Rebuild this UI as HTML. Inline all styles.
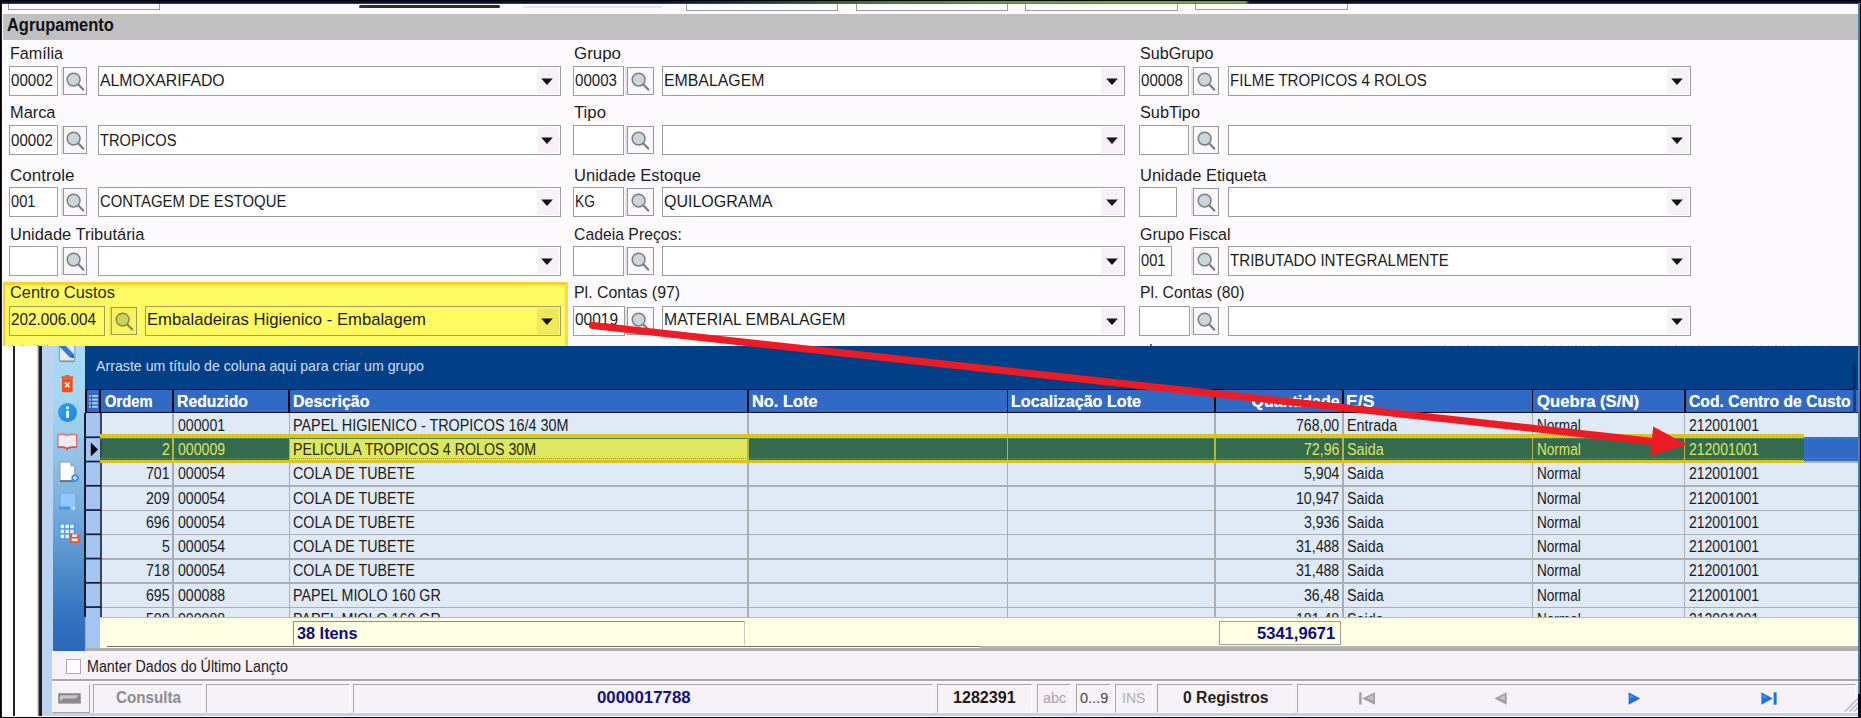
<!DOCTYPE html>
<html lang="pt-BR"><head><meta charset="utf-8"><title>Agrupamento</title>
<style>
html,body{margin:0;padding:0;}
body{width:1861px;height:718px;overflow:hidden;background:#fdfafd;font-family:"Liberation Sans",sans-serif;position:relative;}
#root{position:absolute;left:0;top:0;width:1861px;height:718px;overflow:hidden;background:#fdfafd;}
#root div,#root svg{position:absolute;box-sizing:border-box;}
.t{white-space:pre;transform-origin:0 50%;}
.inp{border:1.5px solid #a6a6a6;background:#fff;}
.btn{border:1.5px solid #8f8f8f;}
.btn svg{top:-1px;}
.dd{}
</style></head><body><div id="root">

<div class="" style="left:3px;top:3px;width:1855px;height:11px;background:#fefcfe;"></div>
<div class="" style="left:8px;top:3px;width:152px;height:7px;border:1.5px solid #9a9a9a;border-top:none;"></div>
<div class="" style="left:358.5px;top:5.2px;width:141.8px;height:3.2px;background:#2c2c2a;border-radius:1.6px;"></div>
<div class="" style="left:523px;top:5.5px;width:139px;height:2.0px;background:#e4e4e8;"></div>
<div class="" style="left:686px;top:3px;width:152px;height:8px;border:1.5px solid #9a9a9a;border-top:none;"></div>
<div class="" style="left:856px;top:3px;width:152px;height:8px;border:1.5px solid #9a9a9a;border-top:none;"></div>
<div class="" style="left:1025px;top:3px;width:153px;height:8px;border:1.5px solid #9a9a9a;border-top:none;"></div>
<div class="" style="left:1195px;top:3px;width:153px;height:7px;border:1.5px solid #9a9a9a;border-top:none;"></div>
<div class="" style="left:3px;top:14px;width:1855px;height:25.5px;background:#c0c0c0;"></div>
<div class="t" style="left:6.60px;top:14.79px;font-size:17.6px;line-height:21.12px;color:#111;font-weight:bold;transform:scaleX(0.9335);">Agrupamento</div>
<div class="" style="left:3.4px;top:282.3px;width:564.2px;height:63.599999999999966px;background:#fffa62;border-top:3px solid #ffd02a;border-left:2.6px solid #ffcc20;border-right:3.6px solid #ffda3e;"></div>
<div class="t" style="left:9.50px;top:43.17px;font-size:17.2px;line-height:20.64px;color:#1c1c1c;transform:scaleX(0.9399);">Família</div>
<div class="inp" style="left:8.5px;top:65.5px;width:49.5px;height:30.099999999999994px;background:#ffffff;border-color:#9c9c9c;"></div>
<div class="btn" style="left:62.7px;top:66.5px;width:24.799999999999997px;height:28.099999999999994px;background:#faf7fa;border-color:#979797;box-shadow:-2px 0 0 #e6e3e6;"><svg style="left:-1.00px" viewBox="0 0 24 28" width="24" height="28"><circle cx="10.6" cy="12.6" r="6.4" fill="#c9d6dc" stroke="#7d7d7d" stroke-width="1.5"/><path d="M15.4 17.6 L20.2 22.6" stroke="#7d7d7d" stroke-width="2.2" stroke-linecap="round"/></svg></div>
<div class="inp" style="left:97.5px;top:65.5px;width:463.20000000000005px;height:30.099999999999994px;background:#ffffff;border-color:#9c9c9c;"></div>
<div class="dd" style="left:536.7px;top:67.5px;width:22.0px;height:26.099999999999994px;background:#f5f1f5;"></div>
<svg class="a" style="left:540.1px;top:76.55px" width="14" height="9" viewBox="0 0 14 9"><path d="M1.2 1.6 L12.8 1.6 L7 8 Z" fill="#111"/></svg>
<div class="t" style="left:10.50px;top:70.17px;font-size:17.2px;line-height:20.64px;color:#1a1a1a;transform:scaleX(0.8781);">00002</div>
<div class="t" style="left:99.50px;top:70.17px;font-size:17.2px;line-height:20.64px;color:#1a1a1a;transform:scaleX(0.9188);">ALMOXARIFADO</div>
<div class="t" style="left:573.60px;top:43.17px;font-size:17.2px;line-height:20.64px;color:#1c1c1c;transform:scaleX(0.9832);">Grupo</div>
<div class="inp" style="left:573px;top:65.5px;width:50.60000000000002px;height:30.099999999999994px;background:#ffffff;border-color:#9c9c9c;"></div>
<div class="btn" style="left:626.9px;top:66.5px;width:26.800000000000068px;height:28.099999999999994px;background:#faf7fa;border-color:#979797;box-shadow:-2px 0 0 #e6e3e6;"><svg style="left:0.00px" viewBox="0 0 24 28" width="24" height="28"><circle cx="10.6" cy="12.6" r="6.4" fill="#c9d6dc" stroke="#7d7d7d" stroke-width="1.5"/><path d="M15.4 17.6 L20.2 22.6" stroke="#7d7d7d" stroke-width="2.2" stroke-linecap="round"/></svg></div>
<div class="inp" style="left:662px;top:65.5px;width:463.20000000000005px;height:30.099999999999994px;background:#ffffff;border-color:#9c9c9c;"></div>
<div class="dd" style="left:1101.2px;top:67.5px;width:22.0px;height:26.099999999999994px;background:#f5f1f5;"></div>
<svg class="a" style="left:1104.6000000000001px;top:76.55px" width="14" height="9" viewBox="0 0 14 9"><path d="M1.2 1.6 L12.8 1.6 L7 8 Z" fill="#111"/></svg>
<div class="t" style="left:575.00px;top:70.17px;font-size:17.2px;line-height:20.64px;color:#1a1a1a;transform:scaleX(0.8781);">00003</div>
<div class="t" style="left:664.00px;top:70.17px;font-size:17.2px;line-height:20.64px;color:#1a1a1a;transform:scaleX(0.9224);">EMBALAGEM</div>
<div class="t" style="left:1139.80px;top:43.17px;font-size:17.2px;line-height:20.64px;color:#1c1c1c;transform:scaleX(0.9374);">SubGrupo</div>
<div class="inp" style="left:1139.2px;top:65.5px;width:49.799999999999955px;height:30.099999999999994px;background:#ffffff;border-color:#9c9c9c;"></div>
<div class="btn" style="left:1192.7px;top:66.5px;width:26.799999999999955px;height:28.099999999999994px;background:#faf7fa;border-color:#979797;box-shadow:-2px 0 0 #e6e3e6;"><svg style="left:-0.00px" viewBox="0 0 24 28" width="24" height="28"><circle cx="10.6" cy="12.6" r="6.4" fill="#c9d6dc" stroke="#7d7d7d" stroke-width="1.5"/><path d="M15.4 17.6 L20.2 22.6" stroke="#7d7d7d" stroke-width="2.2" stroke-linecap="round"/></svg></div>
<div class="inp" style="left:1228px;top:65.5px;width:463px;height:30.099999999999994px;background:#ffffff;border-color:#9c9c9c;"></div>
<div class="dd" style="left:1667px;top:67.5px;width:22px;height:26.099999999999994px;background:#f5f1f5;"></div>
<svg class="a" style="left:1670.4px;top:76.55px" width="14" height="9" viewBox="0 0 14 9"><path d="M1.2 1.6 L12.8 1.6 L7 8 Z" fill="#111"/></svg>
<div class="t" style="left:1141.20px;top:70.17px;font-size:17.2px;line-height:20.64px;color:#1a1a1a;transform:scaleX(0.8781);">00008</div>
<div class="t" style="left:1230.00px;top:70.17px;font-size:17.2px;line-height:20.64px;color:#1a1a1a;transform:scaleX(0.8784);">FILME TROPICOS 4 ROLOS</div>
<div class="t" style="left:9.50px;top:102.17px;font-size:17.2px;line-height:20.64px;color:#1c1c1c;transform:scaleX(0.9521);">Marca</div>
<div class="inp" style="left:8.5px;top:124.7px;width:49.5px;height:30.10000000000001px;background:#ffffff;border-color:#9c9c9c;"></div>
<div class="btn" style="left:62.7px;top:125.7px;width:24.799999999999997px;height:28.10000000000001px;background:#faf7fa;border-color:#979797;box-shadow:-2px 0 0 #e6e3e6;"><svg style="left:-1.00px" viewBox="0 0 24 28" width="24" height="28"><circle cx="10.6" cy="12.6" r="6.4" fill="#c9d6dc" stroke="#7d7d7d" stroke-width="1.5"/><path d="M15.4 17.6 L20.2 22.6" stroke="#7d7d7d" stroke-width="2.2" stroke-linecap="round"/></svg></div>
<div class="inp" style="left:97.5px;top:124.7px;width:463.20000000000005px;height:30.10000000000001px;background:#ffffff;border-color:#9c9c9c;"></div>
<div class="dd" style="left:536.7px;top:126.7px;width:22.0px;height:26.10000000000001px;background:#f5f1f5;"></div>
<svg class="a" style="left:540.1px;top:135.75px" width="14" height="9" viewBox="0 0 14 9"><path d="M1.2 1.6 L12.8 1.6 L7 8 Z" fill="#111"/></svg>
<div class="t" style="left:10.50px;top:130.17px;font-size:17.2px;line-height:20.64px;color:#1a1a1a;transform:scaleX(0.8781);">00002</div>
<div class="t" style="left:99.50px;top:130.17px;font-size:17.2px;line-height:20.64px;color:#1a1a1a;transform:scaleX(0.8516);">TROPICOS</div>
<div class="t" style="left:573.60px;top:102.17px;font-size:17.2px;line-height:20.64px;color:#1c1c1c;transform:scaleX(0.9750);">Tipo</div>
<div class="inp" style="left:573px;top:124.7px;width:50.60000000000002px;height:30.10000000000001px;background:#ffffff;border-color:#9c9c9c;"></div>
<div class="btn" style="left:626.9px;top:125.7px;width:26.800000000000068px;height:28.10000000000001px;background:#faf7fa;border-color:#979797;box-shadow:-2px 0 0 #e6e3e6;"><svg style="left:0.00px" viewBox="0 0 24 28" width="24" height="28"><circle cx="10.6" cy="12.6" r="6.4" fill="#c9d6dc" stroke="#7d7d7d" stroke-width="1.5"/><path d="M15.4 17.6 L20.2 22.6" stroke="#7d7d7d" stroke-width="2.2" stroke-linecap="round"/></svg></div>
<div class="inp" style="left:662px;top:124.7px;width:463.20000000000005px;height:30.10000000000001px;background:#ffffff;border-color:#9c9c9c;"></div>
<div class="dd" style="left:1101.2px;top:126.7px;width:22.0px;height:26.10000000000001px;background:#f5f1f5;"></div>
<svg class="a" style="left:1104.6000000000001px;top:135.75px" width="14" height="9" viewBox="0 0 14 9"><path d="M1.2 1.6 L12.8 1.6 L7 8 Z" fill="#111"/></svg>
<div class="t" style="left:1139.80px;top:102.17px;font-size:17.2px;line-height:20.64px;color:#1c1c1c;transform:scaleX(0.9460);">SubTipo</div>
<div class="inp" style="left:1139.2px;top:124.7px;width:49.799999999999955px;height:30.10000000000001px;background:#ffffff;border-color:#9c9c9c;"></div>
<div class="btn" style="left:1192.7px;top:125.7px;width:26.799999999999955px;height:28.10000000000001px;background:#faf7fa;border-color:#979797;box-shadow:-2px 0 0 #e6e3e6;"><svg style="left:-0.00px" viewBox="0 0 24 28" width="24" height="28"><circle cx="10.6" cy="12.6" r="6.4" fill="#c9d6dc" stroke="#7d7d7d" stroke-width="1.5"/><path d="M15.4 17.6 L20.2 22.6" stroke="#7d7d7d" stroke-width="2.2" stroke-linecap="round"/></svg></div>
<div class="inp" style="left:1228px;top:124.7px;width:463px;height:30.10000000000001px;background:#ffffff;border-color:#9c9c9c;"></div>
<div class="dd" style="left:1667px;top:126.7px;width:22px;height:26.10000000000001px;background:#f5f1f5;"></div>
<svg class="a" style="left:1670.4px;top:135.75px" width="14" height="9" viewBox="0 0 14 9"><path d="M1.2 1.6 L12.8 1.6 L7 8 Z" fill="#111"/></svg>
<div class="t" style="left:9.50px;top:165.17px;font-size:17.2px;line-height:20.64px;color:#1c1c1c;transform:scaleX(0.9921);">Controle</div>
<div class="inp" style="left:8.5px;top:187px;width:49.5px;height:29.599999999999994px;background:#ffffff;border-color:#9c9c9c;"></div>
<div class="btn" style="left:62.7px;top:188px;width:24.799999999999997px;height:27.599999999999994px;background:#faf7fa;border-color:#979797;box-shadow:-2px 0 0 #e6e3e6;"><svg style="left:-1.00px" viewBox="0 0 24 28" width="24" height="28"><circle cx="10.6" cy="12.6" r="6.4" fill="#c9d6dc" stroke="#7d7d7d" stroke-width="1.5"/><path d="M15.4 17.6 L20.2 22.6" stroke="#7d7d7d" stroke-width="2.2" stroke-linecap="round"/></svg></div>
<div class="inp" style="left:97.5px;top:187px;width:463.20000000000005px;height:29.599999999999994px;background:#ffffff;border-color:#9c9c9c;"></div>
<div class="dd" style="left:536.7px;top:189px;width:22.0px;height:25.599999999999994px;background:#f5f1f5;"></div>
<svg class="a" style="left:540.1px;top:197.8px" width="14" height="9" viewBox="0 0 14 9"><path d="M1.2 1.6 L12.8 1.6 L7 8 Z" fill="#111"/></svg>
<div class="t" style="left:10.50px;top:191.17px;font-size:17.2px;line-height:20.64px;color:#1a1a1a;transform:scaleX(0.8538);">001</div>
<div class="t" style="left:99.50px;top:191.17px;font-size:17.2px;line-height:20.64px;color:#1a1a1a;transform:scaleX(0.8661);">CONTAGEM DE ESTOQUE</div>
<div class="t" style="left:573.60px;top:165.17px;font-size:17.2px;line-height:20.64px;color:#1c1c1c;transform:scaleX(0.9624);">Unidade Estoque</div>
<div class="inp" style="left:573px;top:187px;width:50.60000000000002px;height:29.599999999999994px;background:#ffffff;border-color:#9c9c9c;"></div>
<div class="btn" style="left:626.9px;top:188px;width:26.800000000000068px;height:27.599999999999994px;background:#faf7fa;border-color:#979797;box-shadow:-2px 0 0 #e6e3e6;"><svg style="left:0.00px" viewBox="0 0 24 28" width="24" height="28"><circle cx="10.6" cy="12.6" r="6.4" fill="#c9d6dc" stroke="#7d7d7d" stroke-width="1.5"/><path d="M15.4 17.6 L20.2 22.6" stroke="#7d7d7d" stroke-width="2.2" stroke-linecap="round"/></svg></div>
<div class="inp" style="left:662px;top:187px;width:463.20000000000005px;height:29.599999999999994px;background:#ffffff;border-color:#9c9c9c;"></div>
<div class="dd" style="left:1101.2px;top:189px;width:22.0px;height:25.599999999999994px;background:#f5f1f5;"></div>
<svg class="a" style="left:1104.6000000000001px;top:197.8px" width="14" height="9" viewBox="0 0 14 9"><path d="M1.2 1.6 L12.8 1.6 L7 8 Z" fill="#111"/></svg>
<div class="t" style="left:575.00px;top:191.17px;font-size:17.2px;line-height:20.64px;color:#1a1a1a;transform:scaleX(0.8048);">KG</div>
<div class="t" style="left:664.00px;top:191.17px;font-size:17.2px;line-height:20.64px;color:#1a1a1a;transform:scaleX(0.9306);">QUILOGRAMA</div>
<div class="t" style="left:1139.80px;top:165.17px;font-size:17.2px;line-height:20.64px;color:#1c1c1c;transform:scaleX(0.9586);">Unidade Etiqueta</div>
<div class="inp" style="left:1139.2px;top:187px;width:37.799999999999955px;height:29.599999999999994px;background:#ffffff;border-color:#9c9c9c;"></div>
<div class="btn" style="left:1192.7px;top:188px;width:26.799999999999955px;height:27.599999999999994px;background:#faf7fa;border-color:#979797;box-shadow:-2px 0 0 #e6e3e6;"><svg style="left:-0.00px" viewBox="0 0 24 28" width="24" height="28"><circle cx="10.6" cy="12.6" r="6.4" fill="#c9d6dc" stroke="#7d7d7d" stroke-width="1.5"/><path d="M15.4 17.6 L20.2 22.6" stroke="#7d7d7d" stroke-width="2.2" stroke-linecap="round"/></svg></div>
<div class="inp" style="left:1228px;top:187px;width:463px;height:29.599999999999994px;background:#ffffff;border-color:#9c9c9c;"></div>
<div class="dd" style="left:1667px;top:189px;width:22px;height:25.599999999999994px;background:#f5f1f5;"></div>
<svg class="a" style="left:1670.4px;top:197.8px" width="14" height="9" viewBox="0 0 14 9"><path d="M1.2 1.6 L12.8 1.6 L7 8 Z" fill="#111"/></svg>
<div class="t" style="left:9.50px;top:224.17px;font-size:17.2px;line-height:20.64px;color:#1c1c1c;transform:scaleX(0.9570);">Unidade Tributária</div>
<div class="inp" style="left:8.5px;top:246.4px;width:49.5px;height:29.599999999999994px;background:#ffffff;border-color:#9c9c9c;"></div>
<div class="btn" style="left:62.7px;top:247.4px;width:24.799999999999997px;height:27.599999999999994px;background:#faf7fa;border-color:#979797;box-shadow:-2px 0 0 #e6e3e6;"><svg style="left:-1.00px" viewBox="0 0 24 28" width="24" height="28"><circle cx="10.6" cy="12.6" r="6.4" fill="#c9d6dc" stroke="#7d7d7d" stroke-width="1.5"/><path d="M15.4 17.6 L20.2 22.6" stroke="#7d7d7d" stroke-width="2.2" stroke-linecap="round"/></svg></div>
<div class="inp" style="left:97.5px;top:246.4px;width:463.20000000000005px;height:29.599999999999994px;background:#ffffff;border-color:#9c9c9c;"></div>
<div class="dd" style="left:536.7px;top:248.4px;width:22.0px;height:25.599999999999994px;background:#f5f1f5;"></div>
<svg class="a" style="left:540.1px;top:257.2px" width="14" height="9" viewBox="0 0 14 9"><path d="M1.2 1.6 L12.8 1.6 L7 8 Z" fill="#111"/></svg>
<div class="t" style="left:573.60px;top:224.17px;font-size:17.2px;line-height:20.64px;color:#1c1c1c;transform:scaleX(0.9176);">Cadeia Preços:</div>
<div class="inp" style="left:573px;top:246.4px;width:50.60000000000002px;height:29.599999999999994px;background:#ffffff;border-color:#9c9c9c;"></div>
<div class="btn" style="left:626.9px;top:247.4px;width:26.800000000000068px;height:27.599999999999994px;background:#faf7fa;border-color:#979797;box-shadow:-2px 0 0 #e6e3e6;"><svg style="left:0.00px" viewBox="0 0 24 28" width="24" height="28"><circle cx="10.6" cy="12.6" r="6.4" fill="#c9d6dc" stroke="#7d7d7d" stroke-width="1.5"/><path d="M15.4 17.6 L20.2 22.6" stroke="#7d7d7d" stroke-width="2.2" stroke-linecap="round"/></svg></div>
<div class="inp" style="left:662px;top:246.4px;width:463.20000000000005px;height:29.599999999999994px;background:#ffffff;border-color:#9c9c9c;"></div>
<div class="dd" style="left:1101.2px;top:248.4px;width:22.0px;height:25.599999999999994px;background:#f5f1f5;"></div>
<svg class="a" style="left:1104.6000000000001px;top:257.2px" width="14" height="9" viewBox="0 0 14 9"><path d="M1.2 1.6 L12.8 1.6 L7 8 Z" fill="#111"/></svg>
<div class="t" style="left:1139.80px;top:224.17px;font-size:17.2px;line-height:20.64px;color:#1c1c1c;transform:scaleX(0.9293);">Grupo Fiscal</div>
<div class="inp" style="left:1139.2px;top:246.4px;width:33.0px;height:29.599999999999994px;background:#ffffff;border-color:#9c9c9c;"></div>
<div class="btn" style="left:1192.7px;top:247.4px;width:26.799999999999955px;height:27.599999999999994px;background:#faf7fa;border-color:#979797;box-shadow:-2px 0 0 #e6e3e6;"><svg style="left:-0.00px" viewBox="0 0 24 28" width="24" height="28"><circle cx="10.6" cy="12.6" r="6.4" fill="#c9d6dc" stroke="#7d7d7d" stroke-width="1.5"/><path d="M15.4 17.6 L20.2 22.6" stroke="#7d7d7d" stroke-width="2.2" stroke-linecap="round"/></svg></div>
<div class="inp" style="left:1228px;top:246.4px;width:463px;height:29.599999999999994px;background:#ffffff;border-color:#9c9c9c;"></div>
<div class="dd" style="left:1667px;top:248.4px;width:22px;height:25.599999999999994px;background:#f5f1f5;"></div>
<svg class="a" style="left:1670.4px;top:257.2px" width="14" height="9" viewBox="0 0 14 9"><path d="M1.2 1.6 L12.8 1.6 L7 8 Z" fill="#111"/></svg>
<div class="t" style="left:1141.20px;top:250.17px;font-size:17.2px;line-height:20.64px;color:#1a1a1a;transform:scaleX(0.8538);">001</div>
<div class="t" style="left:1230.00px;top:250.17px;font-size:17.2px;line-height:20.64px;color:#1a1a1a;transform:scaleX(0.8792);">TRIBUTADO INTEGRALMENTE</div>
<div class="t" style="left:9.50px;top:282.17px;font-size:17.2px;line-height:20.64px;color:#2a2a10;transform:scaleX(0.9551);">Centro Custos</div>
<div class="inp" style="left:8.5px;top:306.1px;width:96.2px;height:29.599999999999966px;background:#fffa62;border-color:#a39e5e;"></div>
<div class="btn" style="left:111px;top:307.1px;width:26px;height:27.599999999999966px;background:#f8f260;border-color:#9a9a50;box-shadow:-2px 0 0 #ece65c;"><svg style="left:-0.40px" viewBox="0 0 24 28" width="24" height="28"><circle cx="10.6" cy="12.6" r="6.4" fill="#c6d45a" stroke="#8a8a40" stroke-width="1.5"/><path d="M15.4 17.6 L20.2 22.6" stroke="#8a8a40" stroke-width="2.2" stroke-linecap="round"/></svg></div>
<div class="inp" style="left:144.8px;top:306.1px;width:415.90000000000003px;height:29.599999999999966px;background:#fffa62;border-color:#a39e5e;"></div>
<div class="dd" style="left:536.7px;top:308.1px;width:22.0px;height:25.599999999999966px;background:#eee85a;"></div>
<svg class="a" style="left:540.1px;top:316.9px" width="14" height="9" viewBox="0 0 14 9"><path d="M1.2 1.6 L12.8 1.6 L7 8 Z" fill="#111"/></svg>
<div class="t" style="left:10.50px;top:309.17px;font-size:17.2px;line-height:20.64px;color:#1a1a1a;transform:scaleX(0.8887);">202.006.004</div>
<div class="t" style="left:146.80px;top:309.17px;font-size:17.2px;line-height:20.64px;color:#1a1a1a;transform:scaleX(0.9696);">Embaladeiras Higienico - Embalagem</div>
<div class="t" style="left:573.60px;top:282.17px;font-size:17.2px;line-height:20.64px;color:#1c1c1c;transform:scaleX(0.9258);">Pl. Contas (97)</div>
<div class="inp" style="left:573px;top:306.1px;width:52px;height:29.599999999999966px;background:#ffffff;border-color:#9c9c9c;"></div>
<div class="btn" style="left:626.9px;top:307.1px;width:26.800000000000068px;height:27.599999999999966px;background:#faf7fa;border-color:#979797;box-shadow:-2px 0 0 #e6e3e6;"><svg style="left:0.00px" viewBox="0 0 24 28" width="24" height="28"><circle cx="10.6" cy="12.6" r="6.4" fill="#c9d6dc" stroke="#7d7d7d" stroke-width="1.5"/><path d="M15.4 17.6 L20.2 22.6" stroke="#7d7d7d" stroke-width="2.2" stroke-linecap="round"/></svg></div>
<div class="inp" style="left:662px;top:306.1px;width:463.20000000000005px;height:29.599999999999966px;background:#ffffff;border-color:#9c9c9c;"></div>
<div class="dd" style="left:1101.2px;top:308.1px;width:22.0px;height:25.599999999999966px;background:#f5f1f5;"></div>
<svg class="a" style="left:1104.6000000000001px;top:316.9px" width="14" height="9" viewBox="0 0 14 9"><path d="M1.2 1.6 L12.8 1.6 L7 8 Z" fill="#111"/></svg>
<div class="t" style="left:575.00px;top:309.17px;font-size:17.2px;line-height:20.64px;color:#1a1a1a;transform:scaleX(0.8991);">00019</div>
<div class="t" style="left:664.00px;top:309.17px;font-size:17.2px;line-height:20.64px;color:#1a1a1a;transform:scaleX(0.9174);">MATERIAL EMBALAGEM</div>
<div class="t" style="left:1139.80px;top:282.17px;font-size:17.2px;line-height:20.64px;color:#1c1c1c;transform:scaleX(0.9110);">Pl. Contas (80)</div>
<div class="inp" style="left:1139.2px;top:306.1px;width:51.299999999999955px;height:29.599999999999966px;background:#ffffff;border-color:#9c9c9c;"></div>
<div class="btn" style="left:1192.7px;top:307.1px;width:26.799999999999955px;height:27.599999999999966px;background:#faf7fa;border-color:#979797;box-shadow:-2px 0 0 #e6e3e6;"><svg style="left:-0.00px" viewBox="0 0 24 28" width="24" height="28"><circle cx="10.6" cy="12.6" r="6.4" fill="#c9d6dc" stroke="#7d7d7d" stroke-width="1.5"/><path d="M15.4 17.6 L20.2 22.6" stroke="#7d7d7d" stroke-width="2.2" stroke-linecap="round"/></svg></div>
<div class="inp" style="left:1228px;top:306.1px;width:463px;height:29.599999999999966px;background:#ffffff;border-color:#9c9c9c;"></div>
<div class="dd" style="left:1667px;top:308.1px;width:22px;height:25.599999999999966px;background:#f5f1f5;"></div>
<svg class="a" style="left:1670.4px;top:316.9px" width="14" height="9" viewBox="0 0 14 9"><path d="M1.2 1.6 L12.8 1.6 L7 8 Z" fill="#111"/></svg>
<div class="" style="left:11.6px;top:344.6px;width:1.5px;height:1.1999999999999886px;background:#8f8a2a;opacity:.8;"></div>
<div class="" style="left:21.6px;top:344.6px;width:1.5px;height:1.1999999999999886px;background:#8f8a2a;opacity:.8;"></div>
<div class="" style="left:37.2px;top:344.6px;width:1.5px;height:1.1999999999999886px;background:#8f8a2a;opacity:.8;"></div>
<div class="" style="left:46.6px;top:344.6px;width:1.5px;height:1.1999999999999886px;background:#8f8a2a;opacity:.8;"></div>
<div class="" style="left:1150.2px;top:344.2px;width:1.400000000000091px;height:1.5px;background:#6a6a70;"></div>
<div class="" style="left:1429px;top:344.5px;width:421px;height:1.1999999999999886px;background:repeating-linear-gradient(90deg,#9a9aa2 0,#9a9aa2 1.2px,transparent 1.2px,transparent 7.7px);opacity:.45;"></div>
<div class="" style="left:2px;top:345.7px;width:40px;height:370.8px;background:#ffffff;"></div>
<div class="" style="left:12.8px;top:345.7px;width:1.799999999999999px;height:370.8px;background:#222;"></div>
<div class="" style="left:35.5px;top:345.7px;width:6.5px;height:370.8px;background:linear-gradient(90deg,#ffffff 0%,#d8d8d8 30%,#555 48%,#1c1c1c 60%,#1c1c1c 100%);"></div>
<div class="" style="left:42px;top:345.7px;width:1817px;height:370.8px;background:#bcd3ef;"></div>
<div class="" style="left:52.6px;top:345.7px;width:31.999999999999993px;height:305.00000000000006px;background:linear-gradient(180deg,#a9daf4 0%,#a6d6f2 18%,#8fc0e6 38%,#6ea6da 58%,#4a88c8 76%,#2f6fbe 92%,#2b69b8 100%);"></div>
<div style="left:52.6px;top:345.7px;width:32px;height:305px;overflow:hidden;">
<svg style="left:3.6px;top:-5.4px" width="24" height="24" viewBox="0 0 24 24"><path d="M3.4 0 H14.6 L18.8 4.6 V20 Q18.8 21.6 17.2 21.6 H5 Q3.4 21.6 3.4 20 Z" fill="#e6eaf0" stroke="#9aa3ad" stroke-width="1.2"/><path d="M4 21.2 H18.4" stroke="#8a929c" stroke-width="1.6"/><path d="M2 1.4 L15 15" stroke="#2f7bd9" stroke-width="5.2" stroke-linecap="butt"/><path d="M12.8 17 L17.2 12.8 L18.6 18.6 Z" fill="#2a66b8"/></svg>
<svg style="left:7.6px;top:28.2px" width="14.6" height="19.6" viewBox="0 0 18 22" preserveAspectRatio="none"><path d="M6.4 1.2 H11.6 V3 H6.4 Z" fill="#f2521e"/><rect x="1.6" y="2.4" width="14.8" height="2.6" rx="0.8" fill="#f4541f"/><path d="M2.4 5 H15.6 V19 Q15.6 20.4 14.2 20.4 H3.8 Q2.4 20.4 2.4 19 Z" fill="#fb4a12"/><path d="M6.2 9.4 L11.8 15 M11.8 9.4 L6.2 15" stroke="#fff" stroke-width="2.1"/></svg>
<svg style="left:4.6px;top:56.4px" width="21" height="21" viewBox="0 0 21 21"><defs><linearGradient id="gi" x1="0" y1="0" x2="1" y2="1"><stop offset="0" stop-color="#2aa2f2"/><stop offset="1" stop-color="#1a86e0"/></linearGradient></defs><circle cx="10.5" cy="10.5" r="9.4" fill="url(#gi)"/><circle cx="10.5" cy="5.8" r="1.5" fill="#fff"/><rect x="9.2" y="8.4" width="2.7" height="7.6" rx="0.6" fill="#fff"/></svg>
<svg style="left:4.8px;top:87.8px" width="20.6" height="18" viewBox="0 0 23 19" preserveAspectRatio="none"><path d="M1 2.2 Q6.4 0.4 11.5 2.6 Q16.6 0.4 22 2.2 V15.4 Q16.6 14 11.5 16 Q6.4 14 1 15.4 Z" fill="#f1eaf0" stroke="#d9706c" stroke-width="1.5"/><path d="M1.4 15.2 Q6.4 14.2 11.5 16.4 Q16.6 14.2 21.6 15.2" fill="none" stroke="#d25852" stroke-width="1.8"/><path d="M11.5 16 V18.4" stroke="#c85650" stroke-width="1.6"/></svg>
<svg style="left:5.6px;top:115.4px" width="22" height="22" viewBox="0 0 22 22"><path d="M2 1 H12.4 L16.6 5.2 V20 H2 Z" fill="#fdfdfd" stroke="#8a929c" stroke-width="0.9"/><path d="M12.4 1 V5.2 H16.6 Z" fill="#9aa0a8"/><path d="M2 20 H16.6" stroke="#555c66" stroke-width="1.4"/><circle cx="17" cy="17" r="3.7" fill="#3b92ea"/><path d="M15 17 H19 M17 15 V19" stroke="#fff" stroke-width="1.2"/></svg>
<svg style="left:5px;top:147px" width="20" height="18" viewBox="0 0 20 18"><rect x="3" y="1" width="14" height="15.4" fill="#90c8ff"/><rect x="0.8" y="13.4" width="11.6" height="3.4" rx="1" fill="#3d99f2"/><path d="M13.4 16.4 L17 16.4 L17 13 Z" fill="#cfe6ff"/></svg>
<svg style="left:6.4px;top:177px" width="22" height="21" viewBox="0 0 22 21"><rect x="0.6" y="0.6" width="15.4" height="15.6" fill="#4a90de"/><g fill="#eaf2fc"><rect x="1.6" y="1.6" width="3.6" height="3.6"/><rect x="6.4" y="1.6" width="3.6" height="3.6"/><rect x="11.2" y="1.6" width="3.6" height="3.6"/><rect x="1.6" y="6.6" width="3.6" height="3.6"/><rect x="6.4" y="6.6" width="3.6" height="3.6"/><rect x="11.2" y="6.6" width="3.6" height="3.6"/><rect x="1.6" y="11.6" width="3.6" height="3.6"/><rect x="6.4" y="11.6" width="3.6" height="3.6"/></g><rect x="11" y="11.4" width="9.4" height="8.6" rx="0.8" fill="#f0512f"/><rect x="13" y="11.4" width="5.2" height="2.6" fill="#fbd9d0"/><rect x="12.6" y="15.6" width="6.2" height="2.6" fill="#fff"/></svg>
</div>
<div class="" style="left:84.6px;top:345.7px;width:1773.6000000000001px;height:44.30000000000001px;background:#014086;"></div>
<div class="t" style="left:96.40px;top:357.25px;font-size:15px;line-height:18.0px;color:#d3dff2;transform:scaleX(0.9457);">Arraste um título de coluna aqui para criar um grupo</div>
<div class="" style="left:1852.8px;top:363px;width:2.7999999999999545px;height:287px;background:#0a2a63;"></div>
<div class="" style="left:84.6px;top:389px;width:1773.6000000000001px;height:261.70000000000005px;background:#a8a8a8;"></div>
<div class="" style="left:85.8px;top:389px;width:1772.4px;height:228px;background:#dfeaf6;"></div>
<div class="" style="left:85.8px;top:389px;width:1772.4px;height:24.19999999999999px;background:#316ac5;border-top:1.6px solid #050a14;border-bottom:1.6px solid #050a14;"></div>
<div class="" style="left:99.39999999999999px;top:389px;width:1.8000000000000114px;height:24.19999999999999px;background:#050a14;"></div>
<div class="" style="left:172.1px;top:389px;width:1.8000000000000114px;height:24.19999999999999px;background:#050a14;"></div>
<div class="" style="left:288.40000000000003px;top:389px;width:1.7999999999999545px;height:24.19999999999999px;background:#050a14;"></div>
<div class="" style="left:747.1px;top:389px;width:1.7999999999999545px;height:24.19999999999999px;background:#050a14;"></div>
<div class="" style="left:1006.7px;top:389px;width:1.7999999999999545px;height:24.19999999999999px;background:#050a14;"></div>
<div class="" style="left:1214.1px;top:389px;width:1.800000000000182px;height:24.19999999999999px;background:#050a14;"></div>
<div class="" style="left:1342.1px;top:389px;width:1.800000000000182px;height:24.19999999999999px;background:#050a14;"></div>
<div class="" style="left:1531.6999999999998px;top:389px;width:1.800000000000182px;height:24.19999999999999px;background:#050a14;"></div>
<div class="" style="left:1683.8999999999999px;top:389px;width:1.800000000000182px;height:24.19999999999999px;background:#050a14;"></div>
<div class="" style="left:84.8px;top:389px;width:1.7999999999999972px;height:24.19999999999999px;background:#050a14;"></div>
<div class="" style="left:1852.8px;top:389px;width:2.7999999999999545px;height:24.19999999999999px;background:#1b3f86;"></div>
<svg style="left:88px;top:394px" width="11" height="15" viewBox="0 0 11 15"><g fill="#b4caf4"><rect x="1" y="1" width="1.6" height="2"/><rect x="1" y="4.6" width="1.6" height="2"/><rect x="1" y="8.2" width="1.6" height="2"/><rect x="1" y="11.8" width="1.6" height="2"/><rect x="4.2" y="1" width="5.6" height="2"/><rect x="4.2" y="4.6" width="5.6" height="2"/><rect x="4.2" y="8.2" width="5.6" height="2"/><rect x="4.2" y="11.8" width="5.6" height="2"/></g></svg>
<div class="t" style="left:105.00px;top:392.31px;font-size:16.0px;line-height:19.2px;color:#ffffff;font-weight:bold;transform:scaleX(0.9211);text-shadow:0 0 1px rgba(255,255,255,.55);">Ordem</div>
<div class="t" style="left:177.30px;top:392.31px;font-size:16.0px;line-height:19.2px;color:#ffffff;font-weight:bold;transform:scaleX(0.9862);text-shadow:0 0 1px rgba(255,255,255,.55);">Reduzido</div>
<div class="t" style="left:293.00px;top:392.31px;font-size:16.0px;line-height:19.2px;color:#ffffff;font-weight:bold;text-shadow:0 0 1px rgba(255,255,255,.55);">Descrição</div>
<div class="t" style="left:752.00px;top:392.31px;font-size:16.0px;line-height:19.2px;color:#ffffff;font-weight:bold;transform:scaleX(1.0251);text-shadow:0 0 1px rgba(255,255,255,.55);">No. Lote</div>
<div class="t" style="left:1011.30px;top:392.31px;font-size:16.0px;line-height:19.2px;color:#ffffff;font-weight:bold;transform:scaleX(1.0084);text-shadow:0 0 1px rgba(255,255,255,.55);">Localização Lote</div>
<div class="t" style="left:1251.60px;top:392.31px;font-size:16.0px;line-height:19.2px;color:#ffffff;font-weight:bold;text-shadow:0 0 1px rgba(255,255,255,.55);">Quantidade</div>
<div class="t" style="left:1346.30px;top:392.31px;font-size:16.0px;line-height:19.2px;color:#ffffff;font-weight:bold;transform:scaleX(1.1012);text-shadow:0 0 1px rgba(255,255,255,.55);">E/S</div>
<div class="t" style="left:1537.00px;top:392.31px;font-size:16.0px;line-height:19.2px;color:#ffffff;font-weight:bold;transform:scaleX(1.0431);text-shadow:0 0 1px rgba(255,255,255,.55);">Quebra (S/N)</div>
<div class="t" style="left:1689.00px;top:392.31px;font-size:16.0px;line-height:19.2px;color:#ffffff;font-weight:bold;transform:scaleX(0.9834);text-shadow:0 0 1px rgba(255,255,255,.55);">Cod. Centro de Custo</div>
<div style="left:0;top:413.3px;width:1861px;height:203.7px;overflow:hidden;">
<div class="" style="left:85.8px;top:0.0px;width:14.5px;height:25.26px;background:#a5c5f0;"></div>
<div class="" style="left:100.3px;top:23.560000000000002px;width:1757.9px;height:1.3999999999999986px;background:#a9aeb4;"></div>
<div class="t" style="left:177.60px;top:3.02px;font-size:16.3px;line-height:19.56px;color:#1a1a1a;transform:scaleX(0.8680);">000001</div>
<div class="t" style="left:293.00px;top:3.02px;font-size:16.3px;line-height:19.56px;color:#1a1a1a;transform:scaleX(0.8834);">PAPEL HIGIENICO - TROPICOS 16/4 30M</div>
<div class="t" style="left:1296.22px;top:3.02px;font-size:16.3px;line-height:19.56px;color:#1a1a1a;transform:scaleX(0.8680);">768,00</div>
<div class="t" style="left:1346.50px;top:3.02px;font-size:16.3px;line-height:19.56px;color:#1a1a1a;transform:scaleX(0.8790);">Entrada</div>
<div class="t" style="left:1536.80px;top:3.02px;font-size:16.3px;line-height:19.56px;color:#1a1a1a;transform:scaleX(0.8338);">Normal</div>
<div class="t" style="left:1689.00px;top:3.02px;font-size:16.3px;line-height:19.56px;color:#1a1a1a;transform:scaleX(0.8604);">212001001</div>
<div class="" style="left:85.8px;top:24.26px;width:14.5px;height:25.26px;background:#a5c5f0;"></div>
<div class="" style="left:100.3px;top:47.82px;width:1757.9px;height:1.4000000000000057px;background:#a9aeb4;"></div>
<div class="" style="left:100.3px;top:24.060000000000002px;width:1757.9px;height:23.86px;background:#316ac5;"></div>
<div class="" style="left:100.3px;top:24.060000000000002px;width:1704.1000000000001px;height:23.86px;background:#336b4c;"></div>
<div class="" style="left:289.3px;top:25.66px;width:458.7px;height:20.860000000000003px;background:#dfe85c;"></div>
<div class="t" style="left:161.73px;top:27.02px;font-size:16.3px;line-height:19.56px;color:#dbe663;transform:scaleX(0.8680);">2</div>
<div class="t" style="left:177.60px;top:27.02px;font-size:16.3px;line-height:19.56px;color:#dbe663;transform:scaleX(0.8680);">000009</div>
<div class="t" style="left:293.00px;top:27.02px;font-size:16.3px;line-height:19.56px;color:#26260c;transform:scaleX(0.8733);">PELICULA TROPICOS 4 ROLOS 30M</div>
<div class="t" style="left:1304.09px;top:27.02px;font-size:16.3px;line-height:19.56px;color:#dbe663;transform:scaleX(0.8680);">72,96</div>
<div class="t" style="left:1346.50px;top:27.02px;font-size:16.3px;line-height:19.56px;color:#dbe663;transform:scaleX(0.8790);">Saida</div>
<div class="t" style="left:1536.80px;top:27.02px;font-size:16.3px;line-height:19.56px;color:#dbe663;transform:scaleX(0.8338);">Normal</div>
<div class="t" style="left:1689.00px;top:27.02px;font-size:16.3px;line-height:19.56px;color:#dbe663;transform:scaleX(0.8604);">212001001</div>
<div class="" style="left:85.8px;top:48.52px;width:14.5px;height:25.259999999999998px;background:#a5c5f0;"></div>
<div class="" style="left:100.3px;top:72.08px;width:1757.9px;height:1.4000000000000057px;background:#a9aeb4;"></div>
<div class="t" style="left:145.99px;top:51.02px;font-size:16.3px;line-height:19.56px;color:#1a1a1a;transform:scaleX(0.8680);">701</div>
<div class="t" style="left:177.60px;top:51.02px;font-size:16.3px;line-height:19.56px;color:#1a1a1a;transform:scaleX(0.8680);">000054</div>
<div class="t" style="left:293.00px;top:51.02px;font-size:16.3px;line-height:19.56px;color:#1a1a1a;transform:scaleX(0.8765);">COLA DE TUBETE</div>
<div class="t" style="left:1304.09px;top:51.02px;font-size:16.3px;line-height:19.56px;color:#1a1a1a;transform:scaleX(0.8680);">5,904</div>
<div class="t" style="left:1346.50px;top:51.02px;font-size:16.3px;line-height:19.56px;color:#1a1a1a;transform:scaleX(0.8790);">Saida</div>
<div class="t" style="left:1536.80px;top:51.02px;font-size:16.3px;line-height:19.56px;color:#1a1a1a;transform:scaleX(0.8338);">Normal</div>
<div class="t" style="left:1689.00px;top:51.02px;font-size:16.3px;line-height:19.56px;color:#1a1a1a;transform:scaleX(0.8604);">212001001</div>
<div class="" style="left:85.8px;top:72.78px;width:14.5px;height:25.260000000000005px;background:#a5c5f0;"></div>
<div class="" style="left:100.3px;top:96.34px;width:1757.9px;height:1.4000000000000057px;background:#a9aeb4;"></div>
<div class="t" style="left:145.99px;top:76.02px;font-size:16.3px;line-height:19.56px;color:#1a1a1a;transform:scaleX(0.8680);">209</div>
<div class="t" style="left:177.60px;top:76.02px;font-size:16.3px;line-height:19.56px;color:#1a1a1a;transform:scaleX(0.8680);">000054</div>
<div class="t" style="left:293.00px;top:76.02px;font-size:16.3px;line-height:19.56px;color:#1a1a1a;transform:scaleX(0.8765);">COLA DE TUBETE</div>
<div class="t" style="left:1296.22px;top:76.02px;font-size:16.3px;line-height:19.56px;color:#1a1a1a;transform:scaleX(0.8680);">10,947</div>
<div class="t" style="left:1346.50px;top:76.02px;font-size:16.3px;line-height:19.56px;color:#1a1a1a;transform:scaleX(0.8790);">Saida</div>
<div class="t" style="left:1536.80px;top:76.02px;font-size:16.3px;line-height:19.56px;color:#1a1a1a;transform:scaleX(0.8338);">Normal</div>
<div class="t" style="left:1689.00px;top:76.02px;font-size:16.3px;line-height:19.56px;color:#1a1a1a;transform:scaleX(0.8604);">212001001</div>
<div class="" style="left:85.8px;top:97.04px;width:14.5px;height:25.260000000000005px;background:#a5c5f0;"></div>
<div class="" style="left:100.3px;top:120.60000000000001px;width:1757.9px;height:1.4000000000000057px;background:#a9aeb4;"></div>
<div class="t" style="left:145.99px;top:100.02px;font-size:16.3px;line-height:19.56px;color:#1a1a1a;transform:scaleX(0.8680);">696</div>
<div class="t" style="left:177.60px;top:100.02px;font-size:16.3px;line-height:19.56px;color:#1a1a1a;transform:scaleX(0.8680);">000054</div>
<div class="t" style="left:293.00px;top:100.02px;font-size:16.3px;line-height:19.56px;color:#1a1a1a;transform:scaleX(0.8765);">COLA DE TUBETE</div>
<div class="t" style="left:1304.09px;top:100.02px;font-size:16.3px;line-height:19.56px;color:#1a1a1a;transform:scaleX(0.8680);">3,936</div>
<div class="t" style="left:1346.50px;top:100.02px;font-size:16.3px;line-height:19.56px;color:#1a1a1a;transform:scaleX(0.8790);">Saida</div>
<div class="t" style="left:1536.80px;top:100.02px;font-size:16.3px;line-height:19.56px;color:#1a1a1a;transform:scaleX(0.8338);">Normal</div>
<div class="t" style="left:1689.00px;top:100.02px;font-size:16.3px;line-height:19.56px;color:#1a1a1a;transform:scaleX(0.8604);">212001001</div>
<div class="" style="left:85.8px;top:121.30000000000001px;width:14.5px;height:25.25999999999999px;background:#a5c5f0;"></div>
<div class="" style="left:100.3px;top:144.86px;width:1757.9px;height:1.3999999999999773px;background:#a9aeb4;"></div>
<div class="t" style="left:161.73px;top:124.02px;font-size:16.3px;line-height:19.56px;color:#1a1a1a;transform:scaleX(0.8680);">5</div>
<div class="t" style="left:177.60px;top:124.02px;font-size:16.3px;line-height:19.56px;color:#1a1a1a;transform:scaleX(0.8680);">000054</div>
<div class="t" style="left:293.00px;top:124.02px;font-size:16.3px;line-height:19.56px;color:#1a1a1a;transform:scaleX(0.8765);">COLA DE TUBETE</div>
<div class="t" style="left:1296.22px;top:124.02px;font-size:16.3px;line-height:19.56px;color:#1a1a1a;transform:scaleX(0.8680);">31,488</div>
<div class="t" style="left:1346.50px;top:124.02px;font-size:16.3px;line-height:19.56px;color:#1a1a1a;transform:scaleX(0.8790);">Saida</div>
<div class="t" style="left:1536.80px;top:124.02px;font-size:16.3px;line-height:19.56px;color:#1a1a1a;transform:scaleX(0.8338);">Normal</div>
<div class="t" style="left:1689.00px;top:124.02px;font-size:16.3px;line-height:19.56px;color:#1a1a1a;transform:scaleX(0.8604);">212001001</div>
<div class="" style="left:85.8px;top:145.56px;width:14.5px;height:25.26000000000002px;background:#a5c5f0;"></div>
<div class="" style="left:100.3px;top:169.12000000000003px;width:1757.9px;height:1.3999999999999773px;background:#a9aeb4;"></div>
<div class="t" style="left:145.99px;top:148.02px;font-size:16.3px;line-height:19.56px;color:#1a1a1a;transform:scaleX(0.8680);">718</div>
<div class="t" style="left:177.60px;top:148.02px;font-size:16.3px;line-height:19.56px;color:#1a1a1a;transform:scaleX(0.8680);">000054</div>
<div class="t" style="left:293.00px;top:148.02px;font-size:16.3px;line-height:19.56px;color:#1a1a1a;transform:scaleX(0.8765);">COLA DE TUBETE</div>
<div class="t" style="left:1296.22px;top:148.02px;font-size:16.3px;line-height:19.56px;color:#1a1a1a;transform:scaleX(0.8680);">31,488</div>
<div class="t" style="left:1346.50px;top:148.02px;font-size:16.3px;line-height:19.56px;color:#1a1a1a;transform:scaleX(0.8790);">Saida</div>
<div class="t" style="left:1536.80px;top:148.02px;font-size:16.3px;line-height:19.56px;color:#1a1a1a;transform:scaleX(0.8338);">Normal</div>
<div class="t" style="left:1689.00px;top:148.02px;font-size:16.3px;line-height:19.56px;color:#1a1a1a;transform:scaleX(0.8604);">212001001</div>
<div class="" style="left:85.8px;top:169.82000000000002px;width:14.5px;height:25.25999999999999px;background:#a5c5f0;"></div>
<div class="" style="left:100.3px;top:193.38000000000002px;width:1757.9px;height:1.3999999999999773px;background:#a9aeb4;"></div>
<div class="t" style="left:145.99px;top:173.02px;font-size:16.3px;line-height:19.56px;color:#1a1a1a;transform:scaleX(0.8680);">695</div>
<div class="t" style="left:177.60px;top:173.02px;font-size:16.3px;line-height:19.56px;color:#1a1a1a;transform:scaleX(0.8680);">000088</div>
<div class="t" style="left:293.00px;top:173.02px;font-size:16.3px;line-height:19.56px;color:#1a1a1a;transform:scaleX(0.8783);">PAPEL MIOLO 160 GR</div>
<div class="t" style="left:1304.09px;top:173.02px;font-size:16.3px;line-height:19.56px;color:#1a1a1a;transform:scaleX(0.8680);">36,48</div>
<div class="t" style="left:1346.50px;top:173.02px;font-size:16.3px;line-height:19.56px;color:#1a1a1a;transform:scaleX(0.8790);">Saida</div>
<div class="t" style="left:1536.80px;top:173.02px;font-size:16.3px;line-height:19.56px;color:#1a1a1a;transform:scaleX(0.8338);">Normal</div>
<div class="t" style="left:1689.00px;top:173.02px;font-size:16.3px;line-height:19.56px;color:#1a1a1a;transform:scaleX(0.8604);">212001001</div>
<div class="" style="left:85.8px;top:194.08px;width:14.5px;height:25.25999999999999px;background:#a5c5f0;"></div>
<div class="" style="left:100.3px;top:217.64000000000001px;width:1757.9px;height:1.3999999999999773px;background:#a9aeb4;"></div>
<div class="t" style="left:145.99px;top:197.02px;font-size:16.3px;line-height:19.56px;color:#1a1a1a;transform:scaleX(0.8680);">500</div>
<div class="t" style="left:177.60px;top:197.02px;font-size:16.3px;line-height:19.56px;color:#1a1a1a;transform:scaleX(0.8680);">000088</div>
<div class="t" style="left:293.00px;top:197.02px;font-size:16.3px;line-height:19.56px;color:#1a1a1a;transform:scaleX(0.8783);">PAPEL MIOLO 160 GR</div>
<div class="t" style="left:1296.22px;top:197.02px;font-size:16.3px;line-height:19.56px;color:#1a1a1a;transform:scaleX(0.8680);">181,48</div>
<div class="t" style="left:1346.50px;top:197.02px;font-size:16.3px;line-height:19.56px;color:#1a1a1a;transform:scaleX(0.8790);">Saida</div>
<div class="t" style="left:1536.80px;top:197.02px;font-size:16.3px;line-height:19.56px;color:#1a1a1a;transform:scaleX(0.8338);">Normal</div>
<div class="t" style="left:1689.00px;top:197.02px;font-size:16.3px;line-height:19.56px;color:#1a1a1a;transform:scaleX(0.8604);">212001001</div>
<div class="" style="left:172.3px;top:0px;width:1.3999999999999773px;height:218.34px;background:#a9aeb4;"></div>
<div class="" style="left:288.6px;top:0px;width:1.3999999999999773px;height:218.34px;background:#a9aeb4;"></div>
<div class="" style="left:747.3px;top:0px;width:1.400000000000091px;height:218.34px;background:#a9aeb4;"></div>
<div class="" style="left:1006.9px;top:0px;width:1.400000000000091px;height:218.34px;background:#a9aeb4;"></div>
<div class="" style="left:1214.3px;top:0px;width:1.400000000000091px;height:218.34px;background:#a9aeb4;"></div>
<div class="" style="left:1342.3px;top:0px;width:1.400000000000091px;height:218.34px;background:#a9aeb4;"></div>
<div class="" style="left:1531.8999999999999px;top:0px;width:1.400000000000091px;height:218.34px;background:#a9aeb4;"></div>
<div class="" style="left:1684.1px;top:0px;width:1.400000000000091px;height:218.34px;background:#a9aeb4;"></div>
<div class="" style="left:100.1px;top:0px;width:1.8000000000000114px;height:218.34px;background:#39435a;"></div>
<div class="" style="left:84.0px;top:0px;width:2.0px;height:218.34px;background:#141c30;"></div>
<svg style="left:85.8px;top:0" width="15" height="218.34" viewBox="0 0 15 218.34"><rect x="0" y="23.41" width="15" height="1.7" fill="#101c36"/><rect x="0" y="47.67" width="15" height="1.7" fill="#101c36"/><rect x="0" y="71.93" width="15" height="1.7" fill="#101c36"/><rect x="0" y="96.19" width="15" height="1.7" fill="#101c36"/><rect x="0" y="120.45" width="15" height="1.7" fill="#101c36"/><rect x="0" y="144.71" width="15" height="1.7" fill="#101c36"/><rect x="0" y="168.97" width="15" height="1.7" fill="#101c36"/><rect x="0" y="193.23" width="15" height="1.7" fill="#101c36"/><rect x="0" y="217.49" width="15" height="1.7" fill="#101c36"/></svg>
<div class="" style="left:100.3px;top:20.66px;width:1704.1000000000001px;height:3.900000000000002px;background:#dcc31e;"></div>
<div class="" style="left:100.3px;top:46.42px;width:1704.1000000000001px;height:3.700000000000003px;background:#dcc31e;"></div>
<div class="" style="left:100.3px;top:24.860000000000003px;width:1757.9px;height:1.3999999999999986px;border-top:1.4px dotted #8c8a34;"></div>
<div class="" style="left:100.3px;top:45.120000000000005px;width:1757.9px;height:1.3999999999999986px;border-top:1.4px dotted #8c8a34;"></div>
<div class="" style="left:172.3px;top:24.560000000000002px;width:1.3999999999999773px;height:21.86px;background:#b7b23a;"></div>
<div class="" style="left:288.6px;top:24.560000000000002px;width:1.3999999999999773px;height:21.86px;background:#b7b23a;"></div>
<div class="" style="left:747.3px;top:24.560000000000002px;width:1.400000000000091px;height:21.86px;background:#b7b23a;"></div>
<div class="" style="left:1006.9px;top:24.560000000000002px;width:1.400000000000091px;height:21.86px;background:#b7b23a;"></div>
<div class="" style="left:1214.3px;top:24.560000000000002px;width:1.400000000000091px;height:21.86px;background:#b7b23a;"></div>
<div class="" style="left:1342.3px;top:24.560000000000002px;width:1.400000000000091px;height:21.86px;background:#b7b23a;"></div>
<div class="" style="left:1531.8999999999999px;top:24.560000000000002px;width:1.400000000000091px;height:21.86px;background:#b7b23a;"></div>
<div class="" style="left:1684.1px;top:24.560000000000002px;width:1.400000000000091px;height:21.86px;background:#b7b23a;"></div>
<svg style="left:89.5px;top:28.660000000000004px" width="9" height="15" viewBox="0 0 9 15"><path d="M0.8 0.6 L8 7.5 L0.8 14.4 Z" fill="#0a0a0a"/></svg>
</div>
<div class="" style="left:85.8px;top:617px;width:1772.4px;height:30.600000000000023px;background:#ffffe3;border-top:1.4px solid #b9b9b9;"></div>
<div class="" style="left:85.8px;top:617px;width:14.5px;height:30.600000000000023px;background:#a5c5f0;"></div>
<div class="" style="left:106.5px;top:645.8px;width:873.5px;height:1.7000000000000455px;background:#6f6f66;"></div>
<div class="" style="left:980px;top:646.2px;width:878.2px;height:1.3999999999999773px;background:#b4b4ac;"></div>
<div class="" style="left:292.8px;top:620.9px;width:452.2px;height:24.5px;background:#ffffe3;border-left:1.4px solid #8d8d86;border-top:1.4px solid #8d8d86;border-right:1.4px solid #c9c9bb;"></div>
<div class="t" style="left:297.40px;top:624.68px;font-size:15.6px;line-height:18.72px;color:#0b0b8c;font-weight:bold;transform:scaleX(1.0430);">38 Itens</div>
<div class="" style="left:1219px;top:620.7px;width:121.70000000000005px;height:24.699999999999932px;background:#ffffe3;border:1.4px solid #9d9d95;"></div>
<div class="t" style="left:1256.70px;top:624.68px;font-size:15.6px;line-height:18.72px;color:#0b0b8c;font-weight:bold;transform:scaleX(1.0617);">5341,9671</div>
<div class="" style="left:84.6px;top:647.6px;width:1773.6000000000001px;height:3.1000000000000227px;background:#aeaeae;"></div>
<div class="" style="left:52px;top:650.7px;width:1806.2px;height:62.09999999999991px;background:#f6f1f6;"></div>
<div class="" style="left:65.8px;top:659.2px;width:14.900000000000006px;height:14.799999999999955px;background:#fff;border:1.4px solid #a9a9a9;"></div>
<div class="t" style="left:87.30px;top:657.68px;font-size:15.6px;line-height:18.72px;color:#1d1d1d;transform:scaleX(0.9162);">Manter Dados do Último Lançto</div>
<div class="" style="left:52px;top:679.4px;width:1806.2px;height:1.6000000000000227px;background:#aaa6aa;"></div>
<div class="" style="left:52px;top:681px;width:1806.2px;height:1.3999999999999773px;background:#fffcff;"></div>
<div class="" style="left:52px;top:683.6px;width:38.2px;height:29.0px;border-right:1.5px solid #a6a2a6;border-bottom:1.5px solid #a6a2a6;border-left:1.5px solid #fffcff;border-top:1.5px solid #fffcff;"></div>
<svg style="left:58px;top:692.8px" width="23" height="11" viewBox="0 0 23 11"><rect x="0.2" y="0.2" width="22.6" height="10.4" fill="#8b898b"/><path d="M2.6 2.2 L20.6 2.2 L17.6 5.6 L4.2 5.6 Z" fill="#c9c7c9"/><path d="M2.2 2 L4.6 5.4 L2.2 8.6 Z" fill="#d8d6d8"/></svg>
<div class="" style="left:93.2px;top:683.6px;width:109.8px;height:29.0px;border-left:1.6px solid #a9a5a9;border-top:1.6px solid #a9a5a9;border-right:1.4px solid #fffcff;border-bottom:1.4px solid #fffcff;"></div>
<div class="t" style="left:115.50px;top:688.31px;font-size:16px;line-height:19.2px;color:#8b8b8b;font-weight:bold;transform:scaleX(0.9497);">Consulta</div>
<div class="" style="left:206px;top:683.6px;width:144px;height:29.0px;border-left:1.6px solid #a9a5a9;border-top:1.6px solid #a9a5a9;border-right:1.4px solid #fffcff;border-bottom:1.4px solid #fffcff;"></div>
<div class="" style="left:353px;top:683.6px;width:580px;height:29.0px;border-left:1.6px solid #a9a5a9;border-top:1.6px solid #a9a5a9;border-right:1.4px solid #fffcff;border-bottom:1.4px solid #fffcff;"></div>
<div class="t" style="left:597.35px;top:688.68px;font-size:15.6px;line-height:18.72px;color:#12127e;font-weight:bold;transform:scaleX(1.0799);">0000017788</div>
<div class="" style="left:937.3px;top:683.6px;width:94.70000000000005px;height:29.0px;border-left:1.6px solid #a9a5a9;border-top:1.6px solid #a9a5a9;border-right:1.4px solid #fffcff;border-bottom:1.4px solid #fffcff;"></div>
<div class="t" style="left:953.35px;top:688.68px;font-size:15.6px;line-height:18.72px;color:#1a1a1a;font-weight:bold;transform:scaleX(1.0323);">1282391</div>
<div class="" style="left:1036.7px;top:683.6px;width:34.700000000000045px;height:29.0px;border-left:1.6px solid #a9a5a9;border-top:1.6px solid #a9a5a9;border-right:1.4px solid #fffcff;border-bottom:1.4px solid #fffcff;"></div>
<div class="t" style="left:1042.70px;top:688.87px;font-size:15.4px;line-height:18.48px;color:#a5a5a5;transform:scaleX(0.9385);">abc</div>
<div class="" style="left:1075.7px;top:683.6px;width:35.299999999999955px;height:29.0px;border-left:1.6px solid #a9a5a9;border-top:1.6px solid #a9a5a9;border-right:1.4px solid #fffcff;border-bottom:1.4px solid #fffcff;"></div>
<div class="t" style="left:1080.00px;top:688.87px;font-size:15.4px;line-height:18.48px;color:#454545;transform:scaleX(0.9445);">0...9</div>
<div class="" style="left:1115px;top:683.6px;width:37.59999999999991px;height:29.0px;border-left:1.6px solid #a9a5a9;border-top:1.6px solid #a9a5a9;border-right:1.4px solid #fffcff;border-bottom:1.4px solid #fffcff;"></div>
<div class="t" style="left:1121.70px;top:688.87px;font-size:15.4px;line-height:18.48px;color:#adadad;transform:scaleX(0.9076);">INS</div>
<div class="" style="left:1156.7px;top:683.6px;width:136.29999999999995px;height:29.0px;border-left:1.6px solid #a9a5a9;border-top:1.6px solid #a9a5a9;border-right:1.4px solid #fffcff;border-bottom:1.4px solid #fffcff;"></div>
<div class="t" style="left:1182.70px;top:688.68px;font-size:15.6px;line-height:18.72px;color:#1f1f1f;font-weight:bold;transform:scaleX(1.0075);">0 Registros</div>
<div class="" style="left:1296.7px;top:683.6px;width:559.8px;height:29.0px;border-left:1.6px solid #a9a5a9;border-top:1.6px solid #a9a5a9;border-right:1.4px solid #fffcff;border-bottom:1.4px solid #fffcff;"></div>
<svg style="left:1358.8px;top:692.3px" width="17" height="13" viewBox="0 0 17 13"><rect x="0.2" y="0.3" width="2.4" height="12.4" fill="#a19fa1"/><path d="M16 0.3 L16 12.7 L3 6.5 Z" fill="#a19fa1"/><path d="M14.4 3 L14.4 8.6 L7.6 6.2 Z" fill="#c4c2c4"/></svg>
<svg style="left:1494.2px;top:692.3px" width="14" height="13" viewBox="0 0 14 13"><path d="M12.6 0.3 L12.6 12.7 L0.4 6.5 Z" fill="#a19fa1"/><path d="M11 3 L11 8.6 L4.6 6.2 Z" fill="#c4c2c4"/></svg>
<svg style="left:1628.2px;top:692.3px" width="14" height="13" viewBox="0 0 14 13"><path d="M0.6 0.3 L0.6 12.7 L12.2 6.5 Z" fill="#1f72dc"/><path d="M2 2.6 L2 6 L6.6 5.2 Z" fill="#4a98f0"/></svg>
<svg style="left:1761.4px;top:692.3px" width="17" height="13" viewBox="0 0 17 13"><path d="M0.4 0.3 L0.4 12.7 L11.8 6.5 Z" fill="#1f72dc"/><path d="M1.8 2.6 L1.8 6 L6.4 5.2 Z" fill="#4a98f0"/><rect x="12.6" y="0.3" width="3" height="12.4" fill="#1f72dc"/></svg>
<svg style="left:1842px;top:695px" width="16" height="17" viewBox="0 0 16 17"><g stroke="#b9b5b9" stroke-width="1.4"><path d="M3 16.4 L16 3.4"/><path d="M7.6 16.4 L16 8"/><path d="M12.2 16.4 L16 12.6"/></g></svg>
<svg style="left:0;top:0" width="1861" height="718" viewBox="0 0 1861 718"><path d="M592.6 325.5 L1656 441.9" stroke="#ed1c24" stroke-width="7.2" stroke-linecap="round" fill="none"/><path d="M1653.2 426.6 L1686.9 444.8 L1650.2 455.8 Z" fill="#ed1c24"/></svg>
<div class="" style="left:0px;top:0px;width:1861px;height:3.9px;background:linear-gradient(90deg,#02104e 0%,#02104e 35.5%,#143f3c 41%,#3f7c33 47%,#5c9e39 53%,#66aa3c 60%,#66aa3c 66.9%,#02104e 67.15%,#02104e 100%);"></div>
<div class="" style="left:0px;top:3.3px;width:1861px;height:0.9000000000000004px;background:rgba(42,112,168,.5);"></div>
<div class="" style="left:0px;top:0px;width:1861px;height:1px;background:#000;"></div>
<div class="" style="left:0px;top:0px;width:2.1px;height:718px;background:linear-gradient(90deg,#000 0%,#000 52%,#021a5e 56%,#021a5e 100%);"></div>
<div class="" style="left:1857.9px;top:3px;width:3.099999999999909px;height:715px;background:linear-gradient(90deg,#4a8cc0 0%,#3479b4 60%,#3479b4 68%,#000 70%,#000 100%);"></div>
<div class="" style="left:1857.9px;top:693.5px;width:3.099999999999909px;height:24.5px;background:#05051c;"></div>
<div class="" style="left:0px;top:716.9px;width:1861px;height:1.1000000000000227px;background:#050505;"></div>
</div></body></html>
